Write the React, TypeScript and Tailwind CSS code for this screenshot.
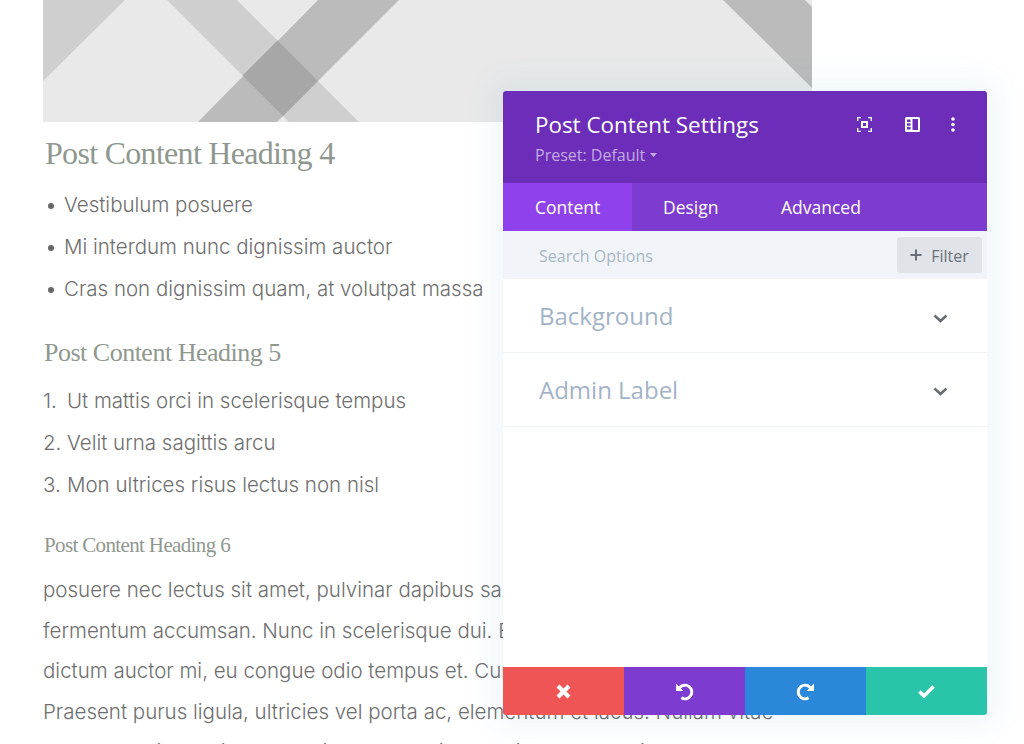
const bodyFont = "font-['Inter',sans-serif] font-light";
const serif = "font-['Liberation_Serif',serif] font-normal text-[#8f978f]";

function Banner() {
  return (
    <div className="h-[122px] w-[769px] bg-[#e9e9e9]">
      <svg width="769" height="122" viewBox="0 0 769 122" className="block">
        <polygon points="0,0 82,0 0,81" fill="#cfcfcf" />
        <polygon points="124,0 194,0 317,123 247,123" fill="#cfcfcf" />
        <polygon points="275,0 356,0 233,123 154,123" fill="#bbbbbb" />
        <polygon points="680,0 762,0 769,7 769,88" fill="#bbbbbb" />
        <polygon points="199.500,75.500 234.500,40.500 275,81 240,116" fill="#a7a7a7" />
      </svg>
    </div>
  );
}

function Panel() {
  return (
    <div className="absolute left-[503px] top-[91px] flex h-[624px] w-[484px] flex-col rounded-[3px] bg-white font-['Open_Sans',sans-serif] font-normal shadow-[0_0_30px_10px_rgba(43,135,218,0.07)]">
      <div className="flex h-[92px] shrink-0 justify-between rounded-t-[3px] bg-[#6c2eb9] pl-[32px] pr-[32px]">
        <div>
          <div className="mt-[17px] text-[22.400px] leading-[34px] font-medium text-white">Post Content Settings</div>
          <div className="mt-[3px] flex items-center gap-[5px] text-[16px] leading-[20px] font-medium text-white/60">
            Preset: Default
            <svg width="7" height="4" viewBox="0 0 7 4"><path d="M0 0h7L3.500 4z" fill="currentColor" /></svg>
          </div>
        </div>
        <div className="mt-[26px] flex h-[15px] items-center">
          <svg width="15" height="15" viewBox="0 0 15 15" fill="none" stroke="white" strokeWidth="1.300" className="mr-[33px]">
            <path d="M.7 4V.7H4M11 .7h3.300V4M14.300 11v3.300H11M4 14.300H.7V11" />
            <rect x="5" y="5" width="5" height="5" strokeWidth="2" />
          </svg>
          <svg width="15" height="15" viewBox="0 0 15 15" className="mr-[31px]">
            <path fillRule="evenodd" fill="white" d="M1.500 0h12A1.500 1.500 0 0 1 15 1.500v12a1.500 1.500 0 0 1-1.500 1.500h-12A1.500 1.500 0 0 1 0 13.500v-12A1.500 1.500 0 0 1 1.500 0zM7.500 2v11h5.500V2zM2 2.500v2.500h3.500V2.500zM2 6.200v2.600h3.500V6.200zM2 10v2.500h3.500V10z" />
          </svg>
          <svg width="4" height="15" viewBox="0 0 4 15" fill="white">
            <circle cx="2" cy="2" r="1.800" /><circle cx="2" cy="7.500" r="1.800" /><circle cx="2" cy="13" r="1.800" />
          </svg>
        </div>
      </div>
      <div className="flex h-[48px] shrink-0 bg-[#7d3bcf] text-[17.500px] font-medium text-white">
        <div className="flex w-[129px] items-center bg-[#8f42ec] pl-[32px]">Content</div>
        <div className="flex w-[149px] items-center pl-[31px]">Design</div>
        <div className="flex items-center">Advanced</div>
      </div>
      <div className="flex h-[48px] shrink-0 items-center justify-between bg-[#f1f5f9] pl-[36px] pr-[5px]">
        <span className="mt-[2px] text-[16px] font-medium text-[#a9b5c2]">Search Options</span>
        <div className="flex h-[36px] w-[85px] items-center justify-center gap-[9px] rounded-[3px] bg-[#e0e3e8] text-[16px] font-medium text-[#6b7178]">
          <svg width="12" height="12" viewBox="0 0 12 12"><path d="M6 .5v11M.5 6h11" stroke="#6b7178" strokeWidth="2" /></svg>
          <span className="mt-[1px]">Filter</span>
        </div>
      </div>
      <div className="flex-1 bg-white">
        {[
          { t: "Background", m: "mt-[5px]" },
          { t: "Admin Label", m: "mt-[3px]" },
        ].map(({ t, m }) => (
          <div key={t} className="flex h-[74px] items-center justify-between border-b border-[#eef3fa] pl-[36px] pr-[39px]">
            <span className="text-[24px] text-[#a3b3c7]">{t}</span>
            <svg width="15" height="9" viewBox="0 0 15 9" fill="none" stroke="#666b70" strokeWidth="2.400" className={m}><path d="M1.500 1.500l6 5.500 6-5.500" /></svg>
          </div>
        ))}
      </div>
      <div className="flex h-[48px] shrink-0">
        <div className="flex flex-1 items-center justify-center rounded-bl-[3px] bg-[#ef5555]">
          <svg width="15" height="15" viewBox="0 0 15 15" stroke="white" strokeWidth="4.200"><path d="M2 2l11 11M13 2L2 13" /></svg>
        </div>
        <div className="flex flex-1 items-center justify-center bg-[#7e3bd0]">
          <svg width="19" height="19" viewBox="0 0 18 18" fill="none" stroke="white" strokeWidth="2.800">
            <path d="M4.500 5.200A6.500 6.500 0 1 1 6 15" /><path fill="white" stroke="none" d="M1 1.500l7 7H1z" />
          </svg>
        </div>
        <div className="flex flex-1 items-center justify-center bg-[#2b87da]">
          <svg width="19" height="19" viewBox="0 0 18 18" fill="none" stroke="white" strokeWidth="2.800">
            <path d="M13.500 5.200A6.500 6.500 0 1 0 12 15" /><path fill="white" stroke="none" d="M17 1.500l-7 7h7z" />
          </svg>
        </div>
        <div className="flex flex-1 items-center justify-center rounded-br-[3px] bg-[#29c4a9]">
          <svg width="17" height="13" viewBox="0 0 17 13" fill="none" stroke="white" strokeWidth="3.600"><path d="M1.500 6.500l4.500 4.500 9.500-9.500" /></svg>
        </div>
      </div>
    </div>
  );
}

export default function App() {
  const li = "text-[20.500px] leading-[42px]";
  return (
    <div className={`relative h-[744px] w-[1024px] overflow-hidden bg-white text-[#6e6e6e] ${bodyFont}`}>
      <div className="pl-[43px]">
        <Banner />
        <h4 className={`mt-[10px] ml-[2px] ${serif} text-[32px] leading-[42px] tracking-[-0.700px]`}>Post Content Heading 4</h4>
        <ul className="mt-[10px]">
          {["Vestibulum posuere", "Mi interdum nunc dignissim auctor", "Cras non dignissim quam, at volutpat massa"].map((t) => (
            <li key={t} className={`${li} flex pl-[5px]`}>
              <span className="mr-[10px] mt-[19px] h-[6px] w-[6px] rounded-full bg-[#666]" />
              {t}
            </li>
          ))}
        </ul>
        <h5 className={`mt-[27px] ml-[1px] ${serif} text-[26px] leading-[32px] tracking-[-0.500px]`}>Post Content Heading 5</h5>
        <ol className="mt-[11px]">
          {[
            { n: "1.", t: "Ut mattis orci in scelerisque tempus" },
            { n: "2.", t: "Velit urna sagittis arcu" },
            { n: "3.", t: "Mon ultrices risus lectus non nisl" },
          ].map(({ n, t }) => (
            <li key={n} className={`${li} flex`}>
              <span className="w-[24px]">{n}</span>
              {t}
            </li>
          ))}
        </ol>
        <h6 className={`mt-[25px] ml-[1px] ${serif} text-[21px] leading-[28px] tracking-[-0.640px]`}>Post Content Heading 6</h6>
        <div className="mt-[11px] whitespace-nowrap text-[20.500px] leading-[40.600px]">
          <p>posuere nec lectus sit amet, pulvinar dapibus sapien. Donec</p>
          <p>fermentum accumsan. Nunc in scelerisque dui. Etiam</p>
          <p>dictum auctor mi, eu congue odio tempus et. Curabitur</p>
          <p>Praesent purus ligula, ultricies vel porta ac, elementum et lacus. Nullam vitae</p>
          <p>sem convallis, pretium nulla sit amet, pulvinar dapibus. Donec ligula</p>
        </div>
      </div>
      <Panel />
    </div>
  );
}
